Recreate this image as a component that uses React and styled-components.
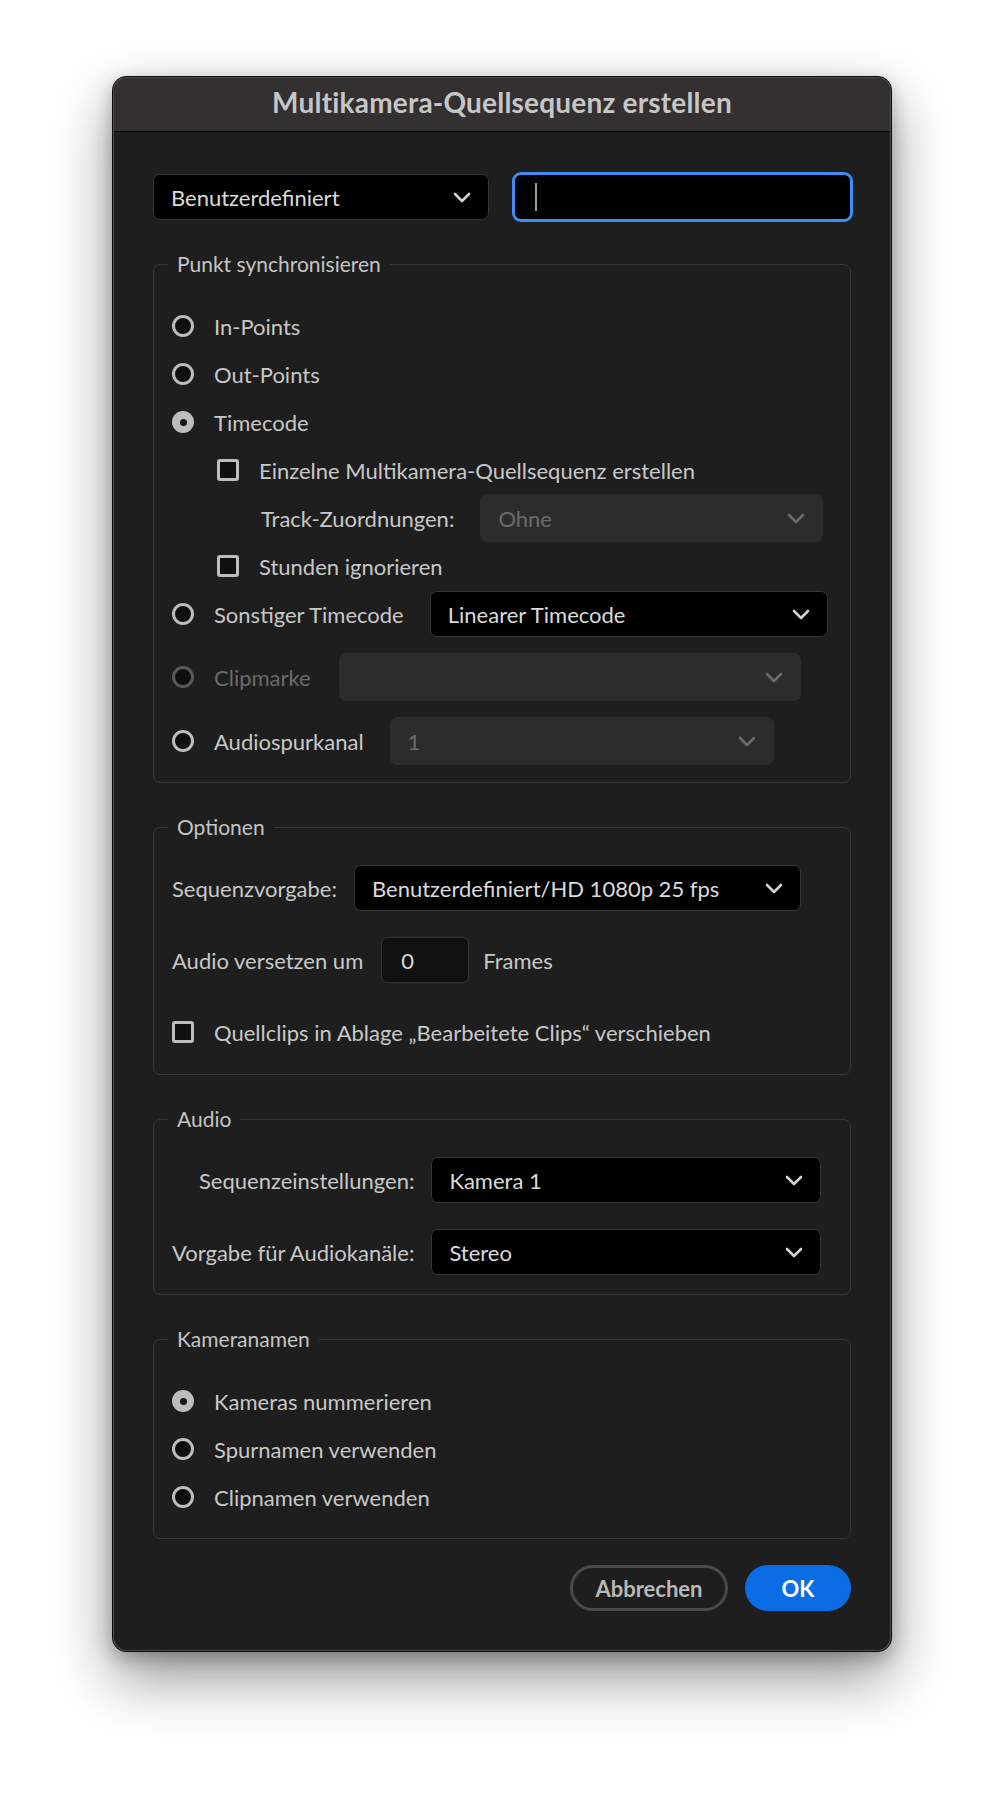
import styled, { createGlobalStyle } from "styled-components";

const GlobalStyle = createGlobalStyle`
  html, body {
    margin: 0;
    padding: 0;
    background: #ffffff;
  }
  body {
    font-family: Lato, "Open Sans", sans-serif;
  }
`;

const Page = styled.div`
  display: flex;
  justify-content: center;
  padding-top: 76px;
  min-height: 1802px;
  box-sizing: border-box;
`;

const Frame = styled.div`
  width: 780px;
  box-sizing: border-box;
  border: 1px solid #0b0b0b;
  border-radius: 14px;
  padding: 1px;
  background: #4e4e4e;
  box-shadow: 0 26px 60px rgba(0, 0, 0, 0.42), 0 6px 18px rgba(0, 0, 0, 0.25);
  align-self: flex-start;
`;

const Window = styled.div`
  border-radius: 13px;
  overflow: hidden;
  background: #1e1e1e;
`;

const TitleBar = styled.div`
  height: 54px;
  box-sizing: border-box;
  padding-bottom: 5px;
  background: #323031;
  border-bottom: 1px solid #050505;
  display: flex;
  align-items: center;
  justify-content: center;
  font-weight: 700;
  font-size: 28px;
  letter-spacing: 0.2px;
  color: #c6c6c6;
`;

const Body = styled.div`
  padding: 42px 39px 39px;
  display: flex;
  flex-direction: column;
  gap: 31px;
`;

const TopRow = styled.div`
  display: grid;
  grid-template-columns: 336px 1fr;
  column-gap: 25px;
`;

const Select = styled.div`
  display: flex;
  align-items: center;
  justify-content: space-between;
  box-sizing: border-box;
  height: ${(p) => (p.$tall ? 48 : 46)}px;
  width: ${(p) => (p.$width ? `${p.$width}px` : "auto")};
  margin-left: ${(p) => p.$gap || 0}px;
  padding: 0 17px 0 17px;
  border-radius: 7px;
  font-size: 22px;
  background: ${(p) => (p.$disabled ? "#2c2c2c" : "#000")};
  border: 1px solid ${(p) => (p.$disabled ? "#2c2c2c" : "#353535")};
  color: ${(p) => (p.$disabled ? "#6b6b6b" : "#dadada")};
  flex-shrink: 0;
`;

const Chevron = ({ dim }) => (
  <svg width="18" height="11" viewBox="0 0 18 11">
    <polyline
      points="2,2 9,9 16,2"
      fill="none"
      stroke={dim ? "#6b6b6b" : "#d2d2d2"}
      strokeWidth="2.6"
      strokeLinecap="round"
      strokeLinejoin="round"
    />
  </svg>
);

const NameInput = styled.div`
  height: 46px;
  box-sizing: border-box;
  border-radius: 7px;
  background: #000;
  border: 1px solid #3e8ef5;
  box-shadow: 0 0 0 2px #3e8ef5;
  display: flex;
  align-items: center;
  padding-left: 20px;
`;

const Caret = styled.span`
  width: 2px;
  height: 28px;
  background: #9a9a9a;
`;

const Group = styled.fieldset`
  margin: 0;
  padding: 25px 21px ${(p) => p.$bottom || 19}px 18px;
  border: 1px solid #363636;
  border-radius: 7px;
  min-width: 0;
`;

const Legend = styled.legend`
  margin-left: -4px;
  padding: 0 9px;
  font-size: 21px;
  line-height: 26px;
  color: #c4c4c4;
`;

const Rows = styled.div`
  display: flex;
  flex-direction: column;
  gap: ${(p) => p.$gap || 0}px;
`;

const Row = styled.div`
  display: flex;
  align-items: center;
  height: ${(p) => p.$h || 48}px;
  padding-left: ${(p) => p.$indent || 0}px;
  margin-top: ${(p) => p.$mt || 0}px;
`;

const Label = styled.span`
  font-size: 22px;
  color: ${(p) => (p.$disabled ? "#6b6b6b" : "#c8c8c8")};
  white-space: nowrap;
  margin-left: ${(p) => p.$ml || 0}px;
`;

const Radio = styled.span`
  width: 22px;
  height: 22px;
  box-sizing: border-box;
  border-radius: 50%;
  border: 3px solid ${(p) => (p.$disabled ? "#5a5a5a" : "#bdbdbd")};
  background: ${(p) => (p.$checked ? "#bdbdbd" : "#0f0f0f")};
  display: flex;
  align-items: center;
  justify-content: center;
  margin-right: 20px;
  flex-shrink: 0;

  &::after {
    content: "";
    display: ${(p) => (p.$checked ? "block" : "none")};
    width: 7px;
    height: 7px;
    border-radius: 50%;
    background: #161616;
  }
`;

const Check = styled.span`
  width: 22px;
  height: 22px;
  box-sizing: border-box;
  border-radius: 3px;
  border: 3px solid #bdbdbd;
  background: #0f0f0f;
  margin-right: 20px;
  flex-shrink: 0;
`;

const NumberBox = styled.div`
  width: 88px;
  height: 46px;
  box-sizing: border-box;
  margin-left: 18px;
  border-radius: 6px;
  background: #111;
  border: 1px solid #353535;
  display: flex;
  align-items: center;
  padding-left: 19px;
  font-size: 22px;
  color: #dadada;
`;

const FormGrid = styled.div`
  display: grid;
  grid-template-columns: max-content 390px;
  column-gap: 17px;
  row-gap: 26px;
  align-items: center;
`;

const GridLabel = styled(Label)`
  justify-self: end;
`;

const Footer = styled.div`
  display: flex;
  justify-content: flex-end;
  gap: 17px;
  margin-top: -5px;
`;

const Button = styled.button`
  height: 46px;
  width: ${(p) => p.$width}px;
  box-sizing: border-box;
  border-radius: 23px;
  font-family: Lato, "Open Sans", sans-serif;
  font-weight: 700;
  font-size: 22px;
  cursor: pointer;
  border: ${(p) => (p.$primary ? "none" : "3px solid #4a4a4a")};
  background: ${(p) => (p.$primary ? "#0b6de6" : "transparent")};
  color: ${(p) => (p.$primary ? "#ffffff" : "#b8b8b8")};
`;

function Dropdown({ value, disabled, width, gap, tall }) {
  return (
    <Select $disabled={disabled} $width={width} $gap={gap} $tall={tall}>
      <span>{value}</span>
      <Chevron dim={disabled} />
    </Select>
  );
}

export default function App() {
  return (
    <>
      <GlobalStyle />
      <Page>
        <Frame>
          <Window>
            <TitleBar>Multikamera-Quellsequenz erstellen</TitleBar>
            <Body>
              <TopRow>
                <Dropdown value="Benutzerdefiniert" />
                <NameInput>
                  <Caret />
                </NameInput>
              </TopRow>

              <Group $bottom={17}>
                <Legend>Punkt synchronisieren</Legend>
                <Rows>
                  <Row>
                    <Radio />
                    <Label>In-Points</Label>
                  </Row>
                  <Row>
                    <Radio />
                    <Label>Out-Points</Label>
                  </Row>
                  <Row>
                    <Radio $checked />
                    <Label>Timecode</Label>
                  </Row>
                  <Row $indent={45}>
                    <Check />
                    <Label>Einzelne Multikamera-Quellsequenz erstellen</Label>
                  </Row>
                  <Row $indent={89}>
                    <Label>Track-Zuordnungen:</Label>
                    <Dropdown value="Ohne" disabled width={343} gap={26} tall />
                  </Row>
                  <Row $indent={45}>
                    <Check />
                    <Label>Stunden ignorieren</Label>
                  </Row>
                  <Row>
                    <Radio />
                    <Label>Sonstiger Timecode</Label>
                    <Dropdown value="Linearer Timecode" width={398} gap={26} />
                  </Row>
                  <Row $mt={15}>
                    <Radio $disabled />
                    <Label $disabled>Clipmarke</Label>
                    <Dropdown value="" disabled width={462} gap={28} tall />
                  </Row>
                  <Row $mt={16}>
                    <Radio />
                    <Label>Audiospurkanal</Label>
                    <Dropdown value="1" disabled width={384} gap={26} tall />
                  </Row>
                </Rows>
              </Group>

              <Group>
                <Legend>Optionen</Legend>
                <Rows $gap={26}>
                  <Row $h={46}>
                    <Label>Sequenzvorgabe:</Label>
                    <Dropdown value="Benutzerdefiniert/HD 1080p 25 fps" width={447} gap={17} />
                  </Row>
                  <Row $h={46}>
                    <Label>Audio versetzen um</Label>
                    <NumberBox>0</NumberBox>
                    <Label $ml={14}>Frames</Label>
                  </Row>
                  <Row $h={46}>
                    <Check />
                    <Label>Quellclips in Ablage „Bearbeitete Clips“ verschieben</Label>
                  </Row>
                </Rows>
              </Group>

              <Group>
                <Legend>Audio</Legend>
                <FormGrid>
                  <GridLabel>Sequenzeinstellungen:</GridLabel>
                  <Dropdown value="Kamera 1" />
                  <GridLabel>Vorgabe für Audiokanäle:</GridLabel>
                  <Dropdown value="Stereo" />
                </FormGrid>
              </Group>

              <Group $bottom={17}>
                <Legend>Kameranamen</Legend>
                <Rows>
                  <Row>
                    <Radio $checked />
                    <Label>Kameras nummerieren</Label>
                  </Row>
                  <Row>
                    <Radio />
                    <Label>Spurnamen verwenden</Label>
                  </Row>
                  <Row>
                    <Radio />
                    <Label>Clipnamen verwenden</Label>
                  </Row>
                </Rows>
              </Group>

              <Footer>
                <Button $width={158}>Abbrechen</Button>
                <Button $primary $width={106}>OK</Button>
              </Footer>
            </Body>
          </Window>
        </Frame>
      </Page>
    </>
  );
}
